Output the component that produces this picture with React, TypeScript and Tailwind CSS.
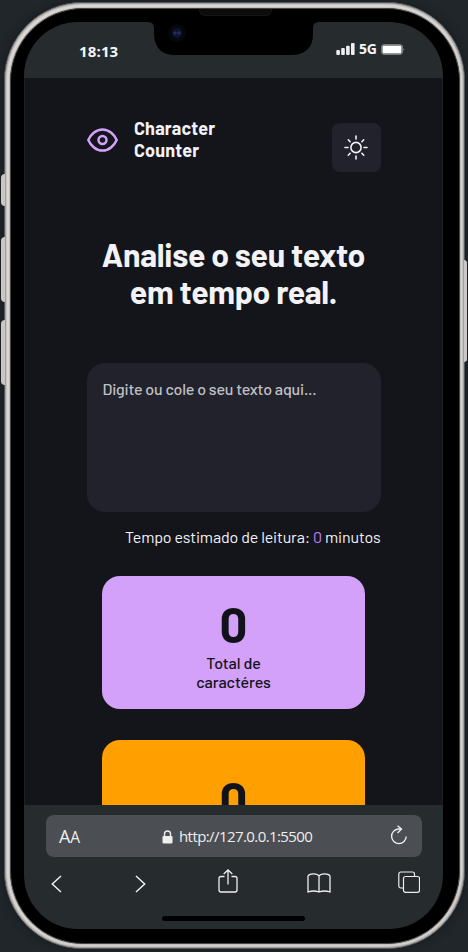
import React from "react";

function StatusBar() {
  return (
    <header className="relative flex h-14 shrink-0 justify-between bg-[#262b2e] text-[#f5f5f5]">
      <time className="mt-[19px] ml-[55px] h-5 font-['Open_Sans','Noto_Sans',sans-serif] text-[15px] leading-5 font-bold tracking-[0.15px]">18:13</time>
      <svg className="absolute top-0 left-[124px]" width="171" height="33" viewBox="0 0 171 33">
        <path d="M0 0Q6 0 6 6V12Q7 33 27 33H144Q165 32 165 12V6Q165 0 171 0Z" fill="#000" />
        <circle cx="29" cy="11" r="9" fill="#08060d" />
        <circle cx="29" cy="11" r="5" fill="#10122b" />
        <circle cx="27" cy="11" r="1.7" fill="#252b6c" />
        <circle cx="31" cy="11" r="1.7" fill="#252b6c" />
      </svg>
      <div className="mt-[18px] mr-[38px] flex h-[19px] items-center">
        <svg className="-mt-px" width="19" height="12" viewBox="0 0 19 12" fill="#eee">
          <rect x="0.3" y="7" width="3.6" height="5" rx="1" />
          <rect x="5.2" y="5" width="3.6" height="7" rx="1" />
          <rect x="10.1" y="2.7" width="3.6" height="9.3" rx="1" />
          <rect x="15" y="0" width="3.6" height="12" rx="1" />
        </svg>
        <span className="-mt-px ml-1 w-[22px] font-['Open_Sans','Noto_Sans',sans-serif] text-[14px] leading-[18px] font-bold tracking-[-0.2px]">5G</span>
        <svg width="24" height="11" viewBox="0 0 24 11">
          <rect x="0.5" y="0.5" width="21" height="10" rx="2.5" fill="none" stroke="#777b7d" />
          <rect x="1.5" y="1.5" width="19" height="8" rx="1" fill="#fff" />
          <path d="M22.5 4Q24 5.5 22.5 7Z" fill="#aaa" />
        </svg>
      </div>
    </header>
  );
}

function AppHeader() {
  return (
    <div className="flex h-[50px] w-[294px] items-start justify-between">
      <div className="flex">
        <svg className="mt-[5px]" width="31" height="24" viewBox="0 0 31 24" fill="none" stroke="#d3a0fa" strokeWidth="2.5">
          <path d="M1.3 12C3.5 7 8.8 1.4 15.5 1.4S27.5 7 29.7 12C27.5 17 22.2 22.6 15.5 22.6S3.5 17 1.3 12Z" strokeLinejoin="round" />
          <circle cx="15.5" cy="12" r="4" />
        </svg>
        <div className="-mt-[6px] ml-[16.5px] text-lg leading-[22px] font-bold tracking-[0.18px]">
          Character<br />Counter
        </div>
      </div>
      <button className="flex size-[49px] items-center justify-center rounded-lg bg-[#21222c]" aria-label="Alternar tema">
        <svg width="24" height="25" viewBox="0 0 24 25" fill="none" stroke="#f2f2f7" strokeWidth="1.6" strokeLinecap="round">
          <circle cx="12" cy="12.5" r="5.1" />
          <path d="M12 1v3M12 21v3M1 12.5h3M20 12.5h3M4.3 4.8l1.8 1.9M17.9 18.3l1.8 1.9M4.3 20.2l1.8-1.9M17.9 6.7l1.8-1.9" />
        </svg>
      </button>
    </div>
  );
}

function Page() {
  return (
    <main className="flex h-[727px] shrink-0 flex-col items-center overflow-hidden border-x border-[#202126] bg-[#14151a] pt-[45px] text-[#f2f2f7]">
      <AppHeader />
      <h1 className="mt-16 h-[74px] shrink-0 text-center text-[32px] leading-[37px] font-bold tracking-[-0.3px] whitespace-nowrap">
        Analise o seu texto<br />em tempo real.
      </h1>
      <textarea className="mt-[53px] block h-[149px] w-[294px] shrink-0 resize-none rounded-[18px] bg-[#21222c] px-4 py-4 text-base leading-5 font-medium tracking-[-0.2px] outline-none placeholder:text-[#c0c0c6]" placeholder="Digite ou cole o seu texto aqui..." />
      <p className="mt-[15px] flex h-5 w-[294px] shrink-0 justify-end text-base leading-5 tracking-[-0.15px] whitespace-pre">
        Tempo estimado de leitura: <span className="text-[#c27cf8]">0</span> minutos
      </p>
      <section className="mt-[29px] flex h-[132.5px] w-[263px] shrink-0 flex-col items-center rounded-[18px] bg-[#d3a0fa] text-[#12131a]">
        <strong className="mt-[19px] text-[49px] leading-[57px] font-bold">0</strong>
        <span className="mt-[0.5px] text-center text-base leading-[19px] font-medium tracking-[-0.1px]">Total de<br />caractéres</span>
      </section>
      <section className="mt-[31.5px] flex h-[133px] w-[263px] shrink-0 flex-col items-center rounded-[18px] bg-[#ff9f00] text-[#12131a]">
        <strong className="mt-[30px] text-[49px] leading-[57px] font-bold">0</strong>
      </section>
    </main>
  );
}

function BrowserBar() {
  return (
    <footer className="flex flex-1 flex-col bg-[#262b2e] pt-[10px] text-[#eee]">
      <div className="mr-[21px] ml-[22px] flex h-[42px] items-center rounded-lg bg-[#4b4e53] font-['Open_Sans','Noto_Sans',sans-serif]">
        <div className="ml-[13px] w-[103px] text-[18px] leading-6 tracking-[-0.1px]">A<span className="text-[15.5px]">A</span></div>
        <svg className="mt-px" width="11" height="14" viewBox="0 0 11 14">
          <path d="M2.5 7V4a3 3 0 0 1 6 0v3" fill="none" stroke="#eee" strokeWidth="1.4" />
          <rect x="0.5" y="6" width="10" height="7.5" rx="1.3" fill="#eee" />
        </svg>
        <span className="ml-[6px] w-[137px] text-[15px] leading-5 tracking-[-0.58px] whitespace-nowrap">http://127.0.0.1:5500</span>
        <svg className="-mt-[3px] mr-[14px] ml-auto" width="18" height="20" viewBox="0 0 18 20" fill="none" stroke="#eee" strokeWidth="1.4">
          <path d="M10.5 4H8.4a7.3 7.3 0 1 0 7.8 7.5M7.5 0.7l4 3.3-4 4" />
        </svg>
      </div>
      <nav className="mt-[13px] mr-[23px] ml-[27px] flex h-[27px] items-center">
        <svg width="11" height="18" viewBox="0 0 11 18" fill="none" stroke="#eee" strokeWidth="1.5"><path d="M10 1L1.3 9l8.7 8" /></svg>
        <svg className="ml-[73px]" width="11" height="18" viewBox="0 0 11 18" fill="none" stroke="#eee" strokeWidth="1.5"><path d="M1 1l8.7 8L1 17" /></svg>
        <svg className="-mt-[5px] ml-[72px]" width="20" height="24" viewBox="0 0 20 24" fill="none" stroke="#eee" strokeWidth="1.3">
          <path d="M6.5 7.5H3a2 2 0 0 0-2 2V21a2 2 0 0 0 2 2h14a2 2 0 0 0 2-2V9.5a2 2 0 0 0-2-2h-3.5M10 15.5V1M5.7 5L10 1l4.3 4" />
        </svg>
        <svg className="-mt-[1px] ml-[69px]" width="24" height="20" viewBox="0 0 24 20" fill="none" stroke="#eee" strokeWidth="1.3">
          <path d="M12 3C10.5 0.5 3 0 1 3V19Q6.5 17 12 19Q17.5 17 23 19V3C21 0 13.5 0.5 12 3V19" />
        </svg>
        <svg className="-mt-[4px] ml-auto" width="22" height="22" viewBox="0 0 22 22" fill="none" stroke="#eee" strokeWidth="1.2">
          <rect x="5.5" y="5.5" width="16" height="15.8" rx="2" />
          <path d="M5.5 17H2.8a2 2 0 0 1-2-2V3a2 2 0 0 1 2-2h11.7a2 2 0 0 1 2 2v2.5" />
        </svg>
      </nav>
      <div className="mt-[19px] ml-[138px] h-[5px] w-[143px] rounded-full bg-black" />
    </footer>
  );
}

export default function App() {
  return (
    <div className="relative h-[952px] w-[468px] overflow-hidden bg-linear-to-r from-[#20262a] via-[#24292c] to-[#20262a] pt-[2px] pl-1 font-['Barlow','Roboto',sans-serif]">
      <div className="relative h-[947px] w-[461px] rounded-[78px] border border-[#55585a] bg-[#dedbd8] p-[4.5px] shadow-[0_0_10px_#15191c,inset_0_0_2px_1px_#8b8987]">
        <div className="h-full rounded-[73px] border border-[#444] bg-black pt-[13.5px] pl-[13.5px] shadow-[0_0_2px_#777]">
          <div className="flex h-[907px] w-[419px] flex-col overflow-hidden rounded-[54px]">
            <StatusBar />
            <Page />
            <BrowserBar />
          </div>
        </div>
        <div className="absolute top-[6px] left-[194px] h-[7px] w-[73px] rounded-b-md border border-t-0 border-[#161616] bg-[#0c0c0c]" />
      </div>
      <div className="absolute top-[174px] left-px h-8 w-1 rounded-l-sm bg-[#c9c6c3]" />
      <div className="absolute top-[237px] left-px h-[65px] w-1 rounded-l-sm bg-[#c9c6c3]" />
      <div className="absolute top-[320px] left-px h-[65px] w-1 rounded-l-sm bg-[#c9c6c3]" />
      <div className="absolute top-[260px] left-[464px] h-[102px] w-[3px] rounded-r-sm bg-[#c9c6c3]" />
    </div>
  );
}
